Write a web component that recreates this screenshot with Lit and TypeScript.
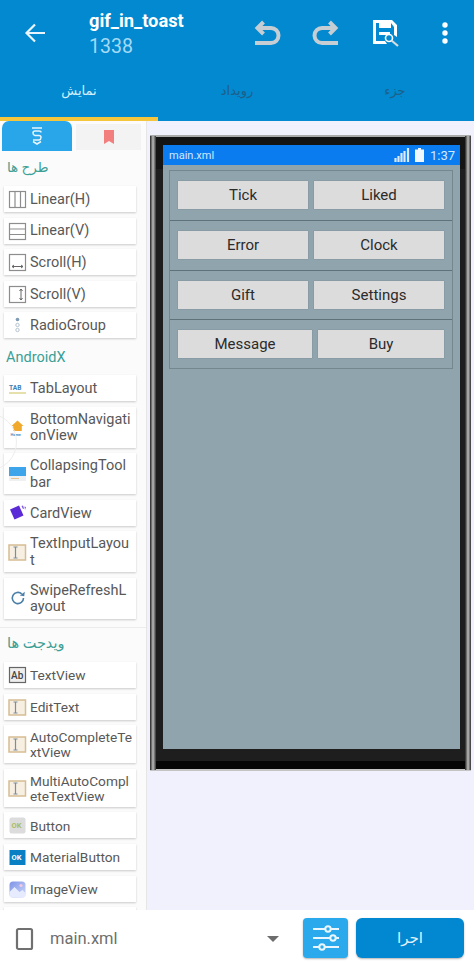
import { LitElement, html, css, svg } from "lit";
import { customElement } from "lit/decorators.js";

const ic = (body: unknown) => html`<svg class="ic" viewBox="0 0 20 20" width="20" height="20">${body}</svg>`;
const g = "#8d8d8d";
const cursorBox = ic(svg`<rect x="1" y="3" width="16.500" height="15" fill="#f6efe2" stroke="#d6bd94" stroke-width="1.500"/><path d="M5.500 5h4M5.500 16h4M7.500 5v11" stroke="#7d8d99" stroke-width="1.200" fill="none"/>`);
const icons: Record<string, unknown> = {
  lh: ic(svg`<rect x="1.500" y="2.500" width="16" height="16" fill="none" stroke="${g}" stroke-width="1.200"/><path d="M7 2.500v16M12.500 2.500v16" stroke="${g}" stroke-width="1.200"/>`),
  lv: ic(svg`<rect x="1.500" y="2.500" width="16" height="16" fill="none" stroke="${g}" stroke-width="1.200"/><path d="M1.500 8h16M1.500 13.500h16" stroke="${g}" stroke-width="1.200"/>`),
  sh: ic(svg`<rect x="1.500" y="2.500" width="16" height="16" fill="none" stroke="${g}" stroke-width="1.200"/><path d="M4 14.500h11M4 14.500l2-1.500M4 14.500l2 1.500M15 14.500l-2-1.500M15 14.500l-2 1.500" stroke="#666" fill="none"/>`),
  sv: ic(svg`<rect x="1.500" y="2.500" width="16" height="16" fill="none" stroke="${g}" stroke-width="1.200"/><path d="M13 5v11M13 5l-1.500 2M13 5l1.500 2M13 16l-1.500-2M13 16l1.500-2" stroke="#666" fill="none"/>`),
  rg: ic(svg`<circle cx="9.500" cy="4.500" r="1.800" fill="#7f9cb5"/><circle cx="9.500" cy="10" r="1.700" fill="none" stroke="#b5c4d0"/><circle cx="9.500" cy="15" r="1.700" fill="none" stroke="#b5c4d0"/>`),
  tab: ic(svg`<text x="1" y="12" font-size="6.600" font-weight="700" font-family="Roboto" fill="#3f7fb5">TAB</text><path d="M1 15h17" stroke="#dcd38a" stroke-width="1.400"/>`),
  bn: ic(svg`<path d="M3.500 9l6-5.500 6 5.500h-1.700v5H5.200V9z" fill="#f0a92c"/><text x="2.500" y="18.800" font-size="3.900" font-family="Roboto" font-weight="700" fill="#4d8cc4">Home</text>`),
  ct: ic(svg`<rect x="1" y="3" width="17" height="9" fill="#3fa5ea"/><rect x="1" y="12" width="17" height="5" fill="#eef0f2"/><path d="M3 14.500h8" stroke="#e3c38f"/>`),
  cv: ic(svg`<path d="M2 6.500l9-4 4.500 10-9 4z" fill="#5a2bd6"/><path d="M13.500 3l1.500-.5 1 3-1 .5zM16.500 3.500l1.500.5-1 3z" fill="#7f55e0"/>`),
  ti: cursorBox,
  sr: ic(svg`<path d="M15.500 10a5.600 5.600 0 1 1-1.800-4.100" fill="none" stroke="#4a7fa8" stroke-width="1.600"/><path d="M16.500 3.600v4.400h-4.400z" fill="#4a7fa8" transform="rotate(8 15 6)"/>`),
  tv: ic(svg`<rect x="1.500" y="2.500" width="16" height="15" fill="#eee" stroke="#666" stroke-width="1.200"/><text x="3" y="14" font-size="10" font-weight="500" font-family="Roboto" fill="#444">Ab</text>`),
  ok: ic(svg`<rect x="1.500" y="2.500" width="16" height="16" rx="2" fill="#dcdcdc"/><text x="3.600" y="13.300" font-size="7.500" font-weight="700" font-family="Roboto" fill="#a9bd5f">OK</text>`),
  mb: ic(svg`<rect x="1.500" y="3" width="16" height="15" fill="#0a80c4"/><text x="3.600" y="13.400" font-size="7.500" font-weight="700" font-family="Roboto" fill="#fff">OK</text>`),
  iv: ic(svg`<defs><linearGradient id="ivg" x1="0" y1="0" x2="1" y2="1"><stop offset="0" stop-color="#7d93e6"/><stop offset="1" stop-color="#cdd9fb"/></linearGradient></defs><rect x="1.500" y="2.500" width="16" height="16" rx="3.500" fill="url(#ivg)"/><path d="M1.500 13l5-5 5 5 3-2 3 3v2a2.500 2.500 0 0 1-2.500 2.500H4a2.500 2.500 0 0 1-2.500-2.500z" fill="#e6ebfd"/><circle cx="13" cy="6.500" r="1.600" fill="#f4c8e0"/>`),
};

const layouts = [["lh", "Linear(H)"], ["lv", "Linear(V)"], ["sh", "Scroll(H)"], ["sv", "Scroll(V)"], ["rg", "RadioGroup"]];
const androidx = [["tab", "TabLayout"], ["bn", "BottomNavigati\nonView"], ["ct", "CollapsingTool\nbar"], ["cv", "CardView"], ["ti", "TextInputLayou\nt"], ["sr", "SwipeRefreshL\nayout"]];
const widgets = [["tv", "TextView"], ["ti", "EditText"], ["ti", "AutoCompleteTe\nxtView"], ["ti", "MultiAutoCompl\neteTextView"], ["ok", "Button"], ["mb", "MaterialButton"], ["iv", "ImageView"], ["", ""]];
const rows = [["Tick", "Liked"], ["Error", "Clock"], ["Gift", "Settings"], ["Message", "Buy"]];

@customElement("app-root")
export class AppRoot extends LitElement {
  static styles = css`
    :host { display: flex; flex-direction: column; width: 474px; height: 967px; overflow: hidden; font-family: Roboto, "DejaVu Sans", sans-serif; background: #fff; }
    .top { background: #0289cf; height: 117px; flex: none; display: flex; flex-direction: column; }
    .bar { height: 66px; display: flex; align-items: center; padding-left: 23px; }
    .back { width: 66px; flex: none; display: flex; }
    .titles { width: 148px; flex: none; padding-top: 2px; }
    .t1 { font-size: 18.300px; font-weight: 700; color: #fff; line-height: 22px; }
    .t2 { font-size: 19.500px; color: #a5daf7; line-height: 24px; margin-top: 3px; }
    .tools { display: flex; align-items: center; }
    .tool { width: 59.500px; display: flex; justify-content: center; }
    .tabs { display: flex; flex: 1; }
    .tab { width: 158px; text-align: center; font-size: 13px; padding-top: 17px; color: #1f5f8a; }
    .tab.on { color: #d5eefb; }
    .ind { flex: none; height: 4px; background: #0289cf; }
    .ind div { width: 158px; height: 4px; background: #f5c63c; }
    .main { flex: 1; min-height: 0; display: flex; }
    .pal { width: 147px; box-sizing: border-box; flex: none; background: #fbfbfb; border-right: 1px solid #e6e6e6; overflow: hidden; position: relative; }
    .ptabs { display: flex; height: 31px; padding-left: 2px; gap: 4px; }
    .ptab { width: 70px; height: 30px; background: #29a6ea; border-radius: 7px 7px 0 0; display: flex; align-items: center; justify-content: center; }
    .ptab.off { width: 65px; height: 26px; margin-top: 3px; background: #f3f3f3; border-radius: 0; }
    .lab { color: #3b9f95; font-size: 13.500px; height: 34px; line-height: 30px; padding-left: 7px; }
    .lab.x { font-size: 14.500px; height: 36.600px; line-height: 39px; padding-left: 6px; }
    .lab.w { height: 34px; line-height: 31px; font-size: 14.500px; }
    .list { display: flex; flex-direction: column; gap: 5.600px; padding: 0 10px 0 4px; }
    .item { background: #fff; box-shadow: 0 1px 2px rgba(0,0,0,.2); min-height: 26px; display: flex; align-items: center; padding: 0 0 0 4px; gap: 2px; box-sizing: border-box; }
    .ic { flex: none; width: 20px; height: 20px; }
    .txt { font-size: 14.500px; line-height: 16.500px; color: #585858; white-space: pre; min-width: 0; padding: 5px 0 3px; }
    .list.tight .txt { line-height: 15px; font-size: 13.700px; }
    .sep { height: 1px; background: #ececec; margin-top: 8px; }
    .ripple { position: absolute; left: -41px; top: 292px; width: 56px; height: 56px; border: 1px solid #eee; border-radius: 50%; }
    .stage { flex: 1; background: #f1f1fd; padding: 14px 3px 0 3px; }
    .phone { height: 636px; box-sizing: border-box; background: linear-gradient(#141414 5%, #1e1e1e 5% calc(100% - 8px), #050505 0); border-top: 2px solid #aaa; border-bottom: 2px solid #c4c4c4; padding: 8px 11px 20px 13px; position: relative; }
    .phone::before, .phone::after { content: ""; position: absolute; top: -1px; bottom: -1px; width: 6px; background: linear-gradient(90deg, #222, #bdbdbd 50%, #333); }
    .phone::before { left: 0; }
    .phone::after { right: 0; }
    .screen { height: 100%; background: #90a4ae; display: flex; flex-direction: column; }
    .status { height: 20px; flex: none; background: #0a7cf0; display: flex; align-items: center; color: #d5e9fc; font-size: 11px; padding: 0 5px 0 6px; }
    .status .sp { flex: 1; }
    .status .tm { font-size: 13px; margin-left: 6px; }
    .box { margin: 5px 7px 0 6px; border: 1px solid #74878f; display: flex; flex-direction: column; }
    .row { height: 49.300px; display: flex; gap: 6px; padding: 10px 8px 0 8px; box-sizing: border-box; border-top: 1px solid #5f727a; }
    .row:first-child { border-top: 0; }
    .btn { flex: 1; height: 28px; background: #dcdcdc; box-shadow: 0 0 1px rgba(0,0,0,.25); display: flex; align-items: center; justify-content: center; font-size: 15px; color: #2b2b2b; }
    .row.last .btn { flex: none; width: 134px; }
    .row.last .btn + .btn { width: 126px; }
    .foot { height: 57px; flex: none; display: flex; align-items: center; background: #fff; padding-left: 15px; }
    .file { margin-left: 15px; font-size: 16.500px; color: #6f6f6f; width: 217px; }
    .caret { width: 0; height: 0; border: 6px solid transparent; border-top: 6px solid #6d6d6d; border-bottom: 0; }
    .tune { margin-left: 24px; margin-bottom: 1px; width: 45px; height: 40px; border-radius: 4px; background: #2aa9ec; box-shadow: 0 1px 2px rgba(0,0,0,.3); display: flex; align-items: center; justify-content: center; }
    .run { margin-left: 8px; margin-bottom: 1px; width: 108px; height: 40px; border-radius: 6px; background: #0288d1; box-shadow: 0 1px 2px rgba(0,0,0,.3); color: #e4f3fb; font-size: 15px; display: flex; align-items: center; justify-content: center; }
  `;

  private list(items: string[][], tight = false) {
    return html`<div class="list ${tight ? "tight" : ""}">${items.map(([k, t]) => html`<div class="item">${k ? icons[k] : ""}<span class="txt">${t}</span></div>`)}</div>`;
  }

  render() {
    return html`
      <div class="top">
        <div class="bar">
          <div class="back"><svg width="24" height="24" viewBox="0 0 24 24"><path d="M22 12H4M12 3.500L3.500 12l8.500 8.500" fill="none" stroke="#e8f5fc" stroke-width="2.200"/></svg></div>
          <div class="titles"><div class="t1">gif_in_toast</div><div class="t2">1338</div></div>
          <div class="tools">
            <div class="tool"><svg width="28" height="28" viewBox="0 0 28 28"><path d="M2 24h16a7.500 7.500 0 0 0 0-15H5M10.500 3L4.500 9l6 6" fill="none" stroke="#c6ced3" stroke-width="4"/></svg></div>
            <div class="tool"><svg width="28" height="28" viewBox="0 0 28 28"><path d="M26 24H10a7.500 7.500 0 0 1 0-15h13M17.500 3l6 6-6 6" fill="none" stroke="#c6ced3" stroke-width="4"/></svg></div>
            <div class="tool"><svg width="30" height="30" viewBox="0 0 30 30"><path d="M2 2h19l5 5v12l-3-2V9l-3-4v5H8V5H5v18h9l2 3H2z" fill="#fff" fill-rule="evenodd"/><rect x="14" y="5" width="3" height="3" fill="#fff"/><path d="M8 14h11v3H8z" fill="#fff"/><circle cx="18" cy="20" r="3.500" fill="none" stroke="#fff" stroke-width="1.600"/><path d="M20.500 22.500L27 28" stroke="#d7dde0" stroke-width="2.200"/></svg></div>
            <div class="tool"><svg width="8" height="24" viewBox="0 0 8 24"><circle cx="4" cy="4" r="2.700" fill="#fff"/><circle cx="4" cy="12" r="2.700" fill="#fff"/><circle cx="4" cy="20" r="2.700" fill="#fff"/></svg></div>
          </div>
        </div>
        <div class="tabs"><div class="tab on">نمایش</div><div class="tab">رویداد</div><div class="tab">جزء</div></div>
      </div>
      <div class="ind"><div></div></div>
      <div class="main">
        <div class="pal">
          <div class="ripple"></div>
          <div class="ptabs">
            <div class="ptab"><svg width="12" height="18" viewBox="0 0 12 18"><path d="M1 1h10M10 5.500Q10 4 8 4H4Q2 4 2 6T4 8.500H8Q10 8.500 10 10.500T8 13H2M2 14.500L6 17l4-2.500" fill="none" stroke="#e6f5fd" stroke-width="1.500"/></svg></div>
            <div class="ptab off"><svg width="10" height="14" viewBox="0 0 10 14"><path d="M0 0h10v14L5 11 0 14z" fill="#f27e7e"/></svg></div>
          </div>
          <div class="lab">طرح ها</div>
          ${this.list(layouts)}
          <div class="lab x">AndroidX</div>
          ${this.list(androidx)}
          <div class="sep"></div>
          <div class="lab w">ویدجت ها</div>
          ${this.list(widgets, true)}
        </div>
        <div class="stage">
          <div class="phone">
            <div class="screen">
              <div class="status">main.xml<span class="sp"></span>
                <svg width="16" height="14" viewBox="0 0 16 14"><path d="M1.500 14v-4M4.500 14V8M7.500 14V5M10.500 14V3M14 14V0" stroke="#dbeafb" stroke-width="2.200"/></svg>
                <svg style="margin-left:5px" width="9" height="14" viewBox="0 0 9 14"><path d="M3 0h3v1.500h3V14H0V1.500h3z" fill="#eef6fe"/></svg>
                <span class="tm">1:37</span></div>
              <div class="box">
                ${rows.map((r, i) => html`<div class="row ${i === 3 ? "last" : ""}"><div class="btn">${r[0]}</div><div class="btn">${r[1]}</div></div>`)}
              </div>
            </div>
          </div>
        </div>
      </div>
      <div class="foot">
        <svg width="20" height="24" viewBox="0 0 20 24"><rect x="2" y="2" width="15" height="20" rx="1.500" fill="none" stroke="#707070" stroke-width="2.200"/></svg>
        <div class="file">main.xml</div>
        <div class="caret"></div>
        <div class="tune"><svg width="28" height="26" viewBox="0 0 28 26"><g stroke="#eaf6fd" stroke-width="2" fill="none"><path d="M1 4h12M19 4h8M1 13h17M24 13h3M1 22h6M13 22h14"/><circle cx="16" cy="4" r="2.700"/><circle cx="21" cy="13" r="2.700"/><circle cx="10" cy="22" r="2.700"/></g></svg></div>
        <div class="run">اجرا</div>
      </div>
    `;
  }
}
